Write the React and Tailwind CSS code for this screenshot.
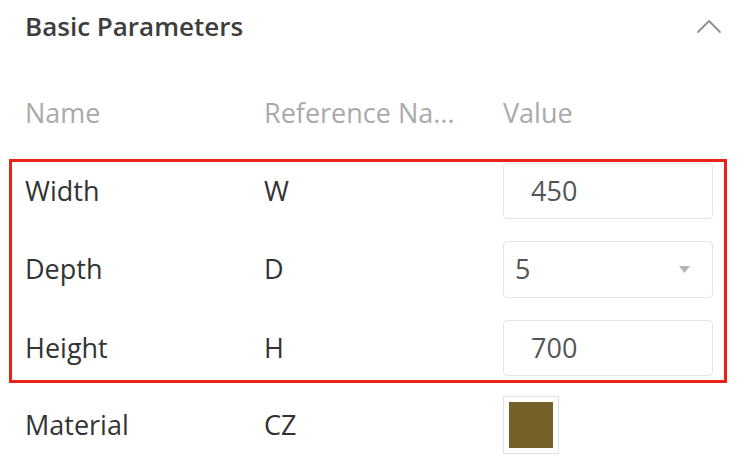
import { useState } from "react";

const rows = [
  { name: "Width", ref: "W", value: "450", kind: "input" },
  { name: "Depth", ref: "D", value: "5", kind: "select" },
  { name: "Height", ref: "H", value: "700", kind: "input" },
];

function ValueCell({ row }) {
  if (row.kind === "select") {
    return (
      <div className="flex h-[57px] w-[210px] items-center justify-between rounded-[4px] border border-[#e4e4e4] pl-[11px] pr-[22px] text-[#555]">
        <span>{row.value}</span>
        <svg width="11" height="7" viewBox="0 0 11 7">
          <path d="M0 0h11L5.5 7z" fill="#b3b3b3" />
        </svg>
      </div>
    );
  }
  return (
    <div className="flex h-[56px] w-[210px] items-center rounded-[4px] border border-[#e4e4e4] pl-[27px] text-[#555]">
      {row.value}
    </div>
  );
}

export default function App() {
  const [open] = useState(true);

  return (
    <div
      className="h-[470px] w-[744px] overflow-hidden bg-white pl-[25px] pr-[25px] text-[27px] text-[#333]"
      style={{ fontFamily: '"Open Sans", "Noto Sans", sans-serif' }}
    >
      <div className="flex h-[52px] items-center justify-between">
        <h2 className="text-[26px] font-semibold text-[#3d3d3d]">Basic Parameters</h2>
        <svg width="26" height="16" viewBox="0 0 26 16" className="mr-[-3px]">
          <polyline
            points="2,14 13,3 24,14"
            fill="none"
            stroke="#8f8f8f"
            strokeWidth="1.8"
            strokeLinecap="round"
            strokeLinejoin="round"
          />
        </svg>
      </div>

      {open && (
        <>
          <div className="grid h-[78px] grid-cols-[239px_239px_210px] items-center text-[#aaa] mt-[22px]">
            <span>Name</span>
            <span className="whitespace-nowrap">Reference Na...</span>
            <span>Value</span>
          </div>

          <div className="-ml-[16px] -mr-[8px] mt-[7px] flex flex-col gap-[22px] border-[3px] border-[#e8231a] pb-[4px] pl-[13px] pt-[1px]">
            {rows.map((row) => (
              <div key={row.name} className="grid grid-cols-[239px_239px_210px] items-center">
                <span>{row.name}</span>
                <span>{row.ref}</span>
                <ValueCell row={row} />
              </div>
            ))}
          </div>

          <div className="mt-[13px] grid h-[58px] grid-cols-[239px_239px_210px] items-center">
            <span>Material</span>
            <span>CZ</span>
            <div className="h-[58px] w-[56px] border border-[#e2e2e2] p-[5px]">
              <div className="h-full w-full bg-[#76612a]" />
            </div>
          </div>
        </>
      )}
    </div>
  );
}
